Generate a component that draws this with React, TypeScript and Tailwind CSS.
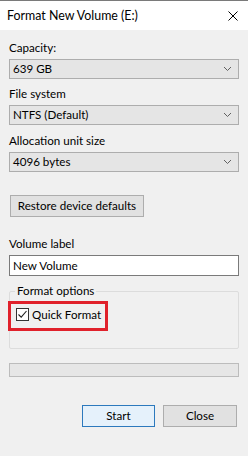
import React from "react";

function Chevron() {
  return (
    <svg width="9" height="6" viewBox="0 0 9 6" className="shrink-0">
      <path d="M1 1 L4.5 4.5 L8 1" fill="none" stroke="#606060" strokeWidth="1" />
    </svg>
  );
}

function Select({ value }: { value: string }) {
  return (
    <div className="mt-[3px] h-[20px] flex items-center justify-between pl-[3px] pr-[6px] bg-[#e5e5e5] border border-[#adadad] text-[#000]">
      <span>{value}</span>
      <Chevron />
    </div>
  );
}

function Label({ text, mt }: { text: string; mt: string }) {
  return <div className={`${mt} h-[16px] leading-[16px] text-[#000]`}>{text}</div>;
}

export default function App() {
  return (
    <div
      className="w-[248px] h-[456px] bg-[#f0f0f0] border-t border-[#7a7a7a] flex flex-col text-[11.6px] overflow-hidden whitespace-nowrap"
      style={{ fontFamily: 'Lato, "Noto Sans", sans-serif' }}
    >
      {/* Title bar */}
      <div className="h-[29px] bg-white flex items-center justify-between pl-[7px] pr-[10px]">
        <span className="text-[12.4px] text-black leading-[16px]">Format New Volume (E:)</span>
        <svg width="10" height="10" viewBox="0 0 10 10">
          <path d="M0.5 0.5 L9.5 9.5 M9.5 0.5 L0.5 9.5" stroke="#000" strokeWidth="1" />
        </svg>
      </div>

      <div className="flex flex-col px-[9px]">
        <Label text="Capacity:" mt="mt-[10px]" />
        <Select value="639 GB" />

        <Label text="File system" mt="mt-[7px]" />
        <Select value="NTFS (Default)" />

        <Label text="Allocation unit size" mt="mt-[8px]" />
        <Select value="4096 bytes" />

        <button className="mt-[23px] ml-[1px] h-[22px] w-[134px] bg-[#e1e1e1] border border-[#adadad] text-black flex items-center justify-center">
          Restore device defaults
        </button>

        <Label text="Volume label" mt="mt-[19px]" />
        <div className="mt-[3px] h-[21px] bg-white border border-[#7a7a7a] flex items-center pl-[3px] text-black">
          New Volume
        </div>

        <fieldset className="mt-[7px] h-[66px] border border-[#dcdcdc] rounded-[2px]">
          <legend className="ml-[5px] px-[2px] h-[16px] leading-[16px] text-black">Format options</legend>
          <div className="mt-[2px] -ml-[2px] w-[100px] h-[30px] border-[3px] border-[#e0212b] flex items-center pl-[5px] pb-[3px] gap-[3px]">
            <div className="w-[13px] h-[13px] shrink-0 bg-white border border-[#333] flex items-center justify-center">
              <svg width="11" height="11" viewBox="0 0 11 11">
                <path d="M1.5 5.5 L4.2 8.2 L9.5 2" fill="none" stroke="#222" strokeWidth="1.1" />
              </svg>
            </div>
            <span className="text-black leading-[16px]">Quick Format</span>
          </div>
        </fieldset>

        <div className="mt-[14px] h-[14px] bg-[#e6e6e6] border border-[#bcbcbc]" />

        <div className="mt-[28px] flex justify-end gap-[8px] mr-[2px]">
          <button className="h-[22px] w-[73px] bg-[#e5f1fb] border border-[#2c79bd] text-black flex items-center justify-center">
            Start
          </button>
          <button className="h-[22px] w-[74px] bg-[#e1e1e1] border border-[#adadad] text-black flex items-center justify-center">
            Close
          </button>
        </div>
      </div>
    </div>
  );
}
